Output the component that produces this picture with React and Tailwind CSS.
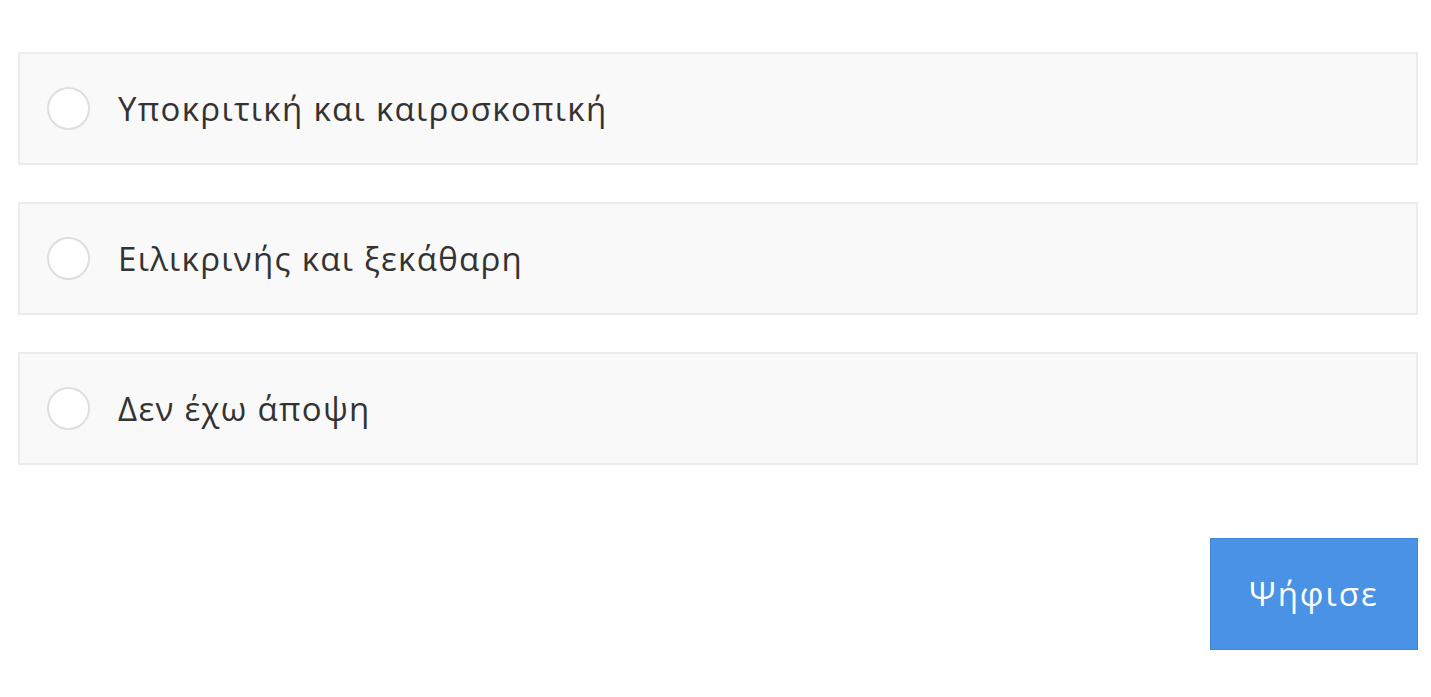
const OPTIONS = ["Υποκριτική και καιροσκοπική", "Ειλικρινής και ξεκάθαρη", "Δεν έχω άποψη"];

export default function App() {
  return (
    <div className="min-h-[697px] bg-white pt-[52px] pl-[18px] font-['Open_Sans','Noto_Sans',sans-serif] text-[#333]">
      <div className="w-[1400px] flex flex-col gap-[37px]">
        {OPTIONS.map((o) => (
          <label
            key={o}
            className="flex items-center h-[113px] bg-[#f9f9f9] border-2 border-[#ececec] pl-[27px] cursor-pointer"
          >
            <span className="w-[43px] h-[43px] rounded-full bg-white border-2 border-[#dedede] shrink-0" />
            <span className="ml-[28px] text-[33px] tracking-[1.3px]">{o}</span>
          </label>
        ))}
      </div>
      <div className="w-[1400px] flex justify-end mt-[73px]">
        <button className="w-[208px] h-[112px] bg-[#4a92e6] border border-[#3f86da] text-white text-[33px] tracking-[2px]">
          Ψήφισε
        </button>
      </div>
    </div>
  );
}
